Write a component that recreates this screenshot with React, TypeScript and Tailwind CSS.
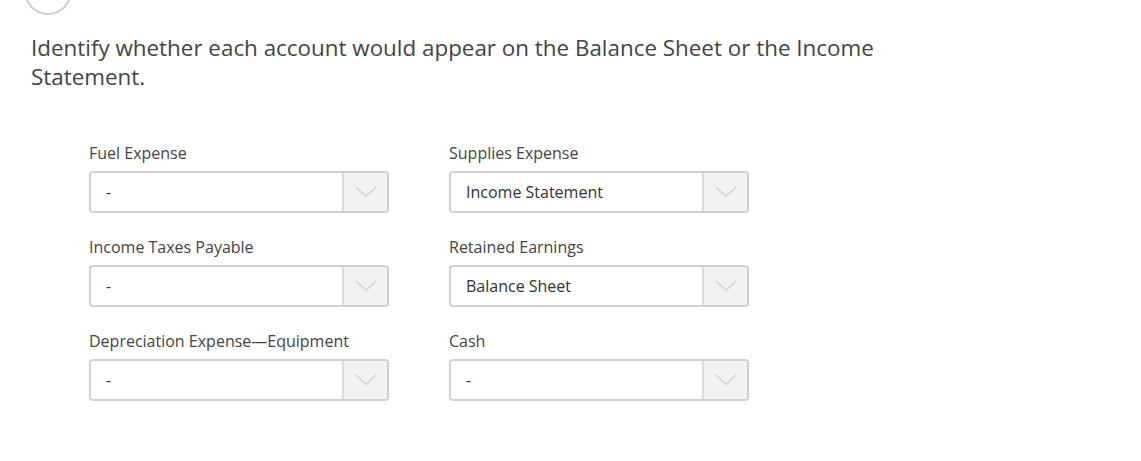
import React from "react";

const rows: [string, string, string, string][] = [
  ["Fuel Expense", "-", "Supplies Expense", "Income Statement"],
  ["Income Taxes Payable", "-", "Retained Earnings", "Balance Sheet"],
  ["Depreciation Expense\u2014Equipment", "-", "Cash", "-"],
];

function Select({ label, value }: { label: string; value: string }) {
  return (
    <div className="flex flex-col">
      <div className="h-[22px] text-[16px] leading-[22px] text-[#444]">{label}</div>
      <div className="mt-[7px] flex h-[42px] w-[300px] rounded-[4px] border-2 border-[#d0d0d0] bg-white">
        <div className="flex flex-1 items-center pl-[15px] text-[16px] text-[#333]">{value}</div>
        <div className="flex w-[45px] items-center justify-center rounded-r-[2px] border-l-2 border-[#dcdcdc] bg-[#f2f2f2]">
          <svg width="22" height="12" viewBox="0 0 22 12" fill="none">
            <path d="M1 1 L11 10.5 L21 1" stroke="#d0d0d0" strokeWidth="1.6" />
          </svg>
        </div>
      </div>
    </div>
  );
}

export default function App() {
  return (
    <div className="min-h-[461px] w-full overflow-hidden bg-white" style={{ fontFamily: '"Open Sans", sans-serif' }}>
      <div className="ml-[24px] mt-[-33px] h-[48px] w-[48px] rounded-full border-2 border-[#cfcfcf]" />
      <div className="ml-[31px] mt-[18px] w-[880px] text-[22.4px] leading-[29px] text-[#444]">
        Identify whether each account would appear on the Balance Sheet or the Income Statement.
      </div>
      <div className="ml-[89px] mt-[51px] grid w-[660px] grid-cols-[300px_300px] gap-x-[60px] gap-y-[23px]">
        {rows.map((r, i) => (
          <React.Fragment key={i}>
            <Select label={r[0]} value={r[1]} />
            <Select label={r[2]} value={r[3]} />
          </React.Fragment>
        ))}
      </div>
    </div>
  );
}
